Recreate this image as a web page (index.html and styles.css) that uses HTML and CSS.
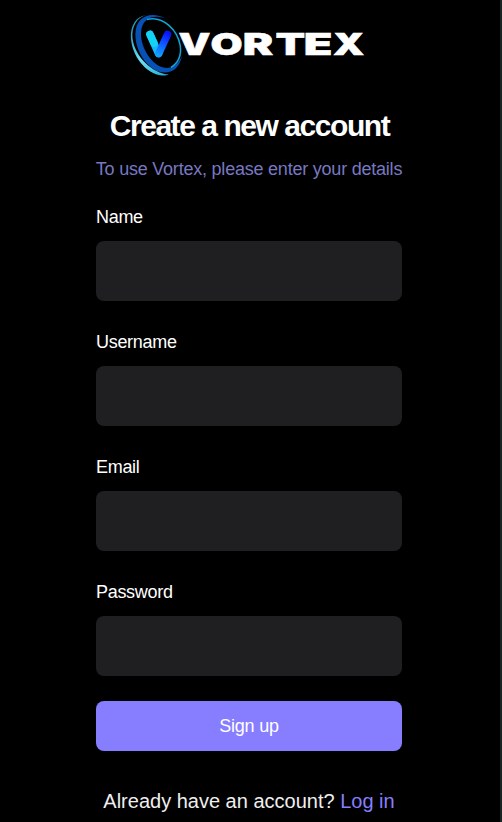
FILE: index.html
```html
<!DOCTYPE html>
<html lang="en">
<head>
<meta charset="utf-8">
<title>Vortex</title>
<link rel="stylesheet" href="styles.css">
</head>
<body>
<main class="page">
  <svg class="logo" width="240" height="66" viewBox="128 12 240 66" role="img" aria-label="Vortex">
    <defs>
      <linearGradient id="right" gradientUnits="userSpaceOnUse" x1="168" y1="33" x2="158" y2="55"><stop offset="0" stop-color="#0a12ff"/><stop offset="1" stop-color="#129fff"/></linearGradient>
      <linearGradient id="rim" x1="0" y1="0" x2="1" y2="1"><stop offset="0" stop-color="#1487a8"/><stop offset=".5" stop-color="#6be0f4"/><stop offset="1" stop-color="#1ba7cf"/></linearGradient>
    </defs>
    <path d="M146 15.200C136 16 130.500 26 130.900 37C131.500 56 146 74 162 75.500C164 75.700 167 75.500 169 74.500C153 73.500 134.500 57 132.500 38C131.500 27 137 17 146 15.200Z" fill="url(#rim)"/>
    <path d="M166 18.500C151 10.500 135.500 16 135.400 34C135 53 150 72.500 165 72.500C174 72.500 180 66 182 56C178 65 172 68.500 165 67.800C152 66 141 48 141 34C141 19 152 13.500 166 18.500Z" fill="#0750b4"/>
    <path d="M147 19.500C164 15.500 178 31 180.300 46C181.500 55 178 63 171 67.500" fill="none" stroke="#0da5d8" stroke-width="1.500"/>
    <path d="M150 34.500L158.500 53.500" stroke="#14b9fb" stroke-width="7.500" stroke-linecap="round"/>
    <path d="M150 34.500L154 43" stroke="#12d3f6" stroke-width="7.500" stroke-linecap="round"/>
    <path d="M167.500 34.500L158.800 53.500" stroke="url(#right)" stroke-width="7.500" stroke-linecap="round"/>
    <g class="wordmark">
      <text transform="translate(178.500 54.600) scale(1.340 1)">V</text>
      <text transform="translate(210.500 54.600) scale(1.380 1)">O</text>
      <text transform="translate(242.800 54.600) scale(1.520 1)">R</text>
      <text transform="translate(275.500 54.600) scale(1.440 1)">T</text>
      <text transform="translate(303.800 54.600) scale(1.560 1)">E</text>
      <text transform="translate(333 54.600) scale(1.330 1)">X</text>
    </g>
  </svg>
  <h1 class="title">Create a new account</h1>
  <p class="subtitle">To use Vortex, please enter your details</p>
  <form class="form">
    <label class="field">Name<input class="input" type="text"></label>
    <label class="field">Username<input class="input" type="text"></label>
    <label class="field">Email<input class="input" type="email"></label>
    <label class="field">Password<input class="input" type="password"></label>
    <button class="submit" type="button">Sign up</button>
  </form>
  <p class="footer">Already have an account? <a class="link" href="#">Log in</a></p>
</main>
</body>
</html>
```
FILE: styles.css
```css
* { box-sizing: border-box; }
body {
  margin: 0;
  height: 822px;
  overflow: hidden;
  background: #000;
  color: #fff;
  font-family: "Liberation Sans", Arial, sans-serif;
}
.page {
  display: flex;
  flex-direction: column;
  align-items: center;
  height: 822px;
  padding: 12px 2px 0 0;
  border-right: 2px solid #172525;
}
.logo { display: block; margin-left: -2px; }
.wordmark {
  fill: #fff;
  stroke: #fff;
  stroke-width: 0.5px;
  font: 900 30px Inter, sans-serif;
}
.title {
  margin: 30px 0 0 1px;
  font-size: 30px;
  line-height: 36px;
  letter-spacing: -1.44px;
}
.subtitle {
  margin: 11px 0 0;
  color: #7878c0;
  font-size: 18px;
  line-height: 28px;
  letter-spacing: -0.22px;
  white-space: nowrap;
}
.form {
  display: flex;
  flex-direction: column;
  width: 306px;
  margin-top: 24px;
}
.field {
  display: flex;
  flex-direction: column;
  height: 125px;
  font-size: 18px;
  line-height: 20px;
  letter-spacing: -0.3px;
}
.input {
  width: 100%;
  height: 60px;
  margin: 14px 0 0;
  border: 0;
  border-radius: 8px;
  background: #1f1f22;
  color: #fff;
}
.submit {
  height: 50px;
  margin-top: -6px;
  border: 0;
  border-radius: 8px;
  background: #877eff;
  color: #fff;
  font: 18px "Liberation Sans", Arial, sans-serif;
  letter-spacing: -0.2px;
}
.footer {
  margin: 36px 0 0;
  color: #efefef;
  font-size: 20px;
  line-height: 28px;
}
.link { color: #877eff; text-decoration: none; }
```
